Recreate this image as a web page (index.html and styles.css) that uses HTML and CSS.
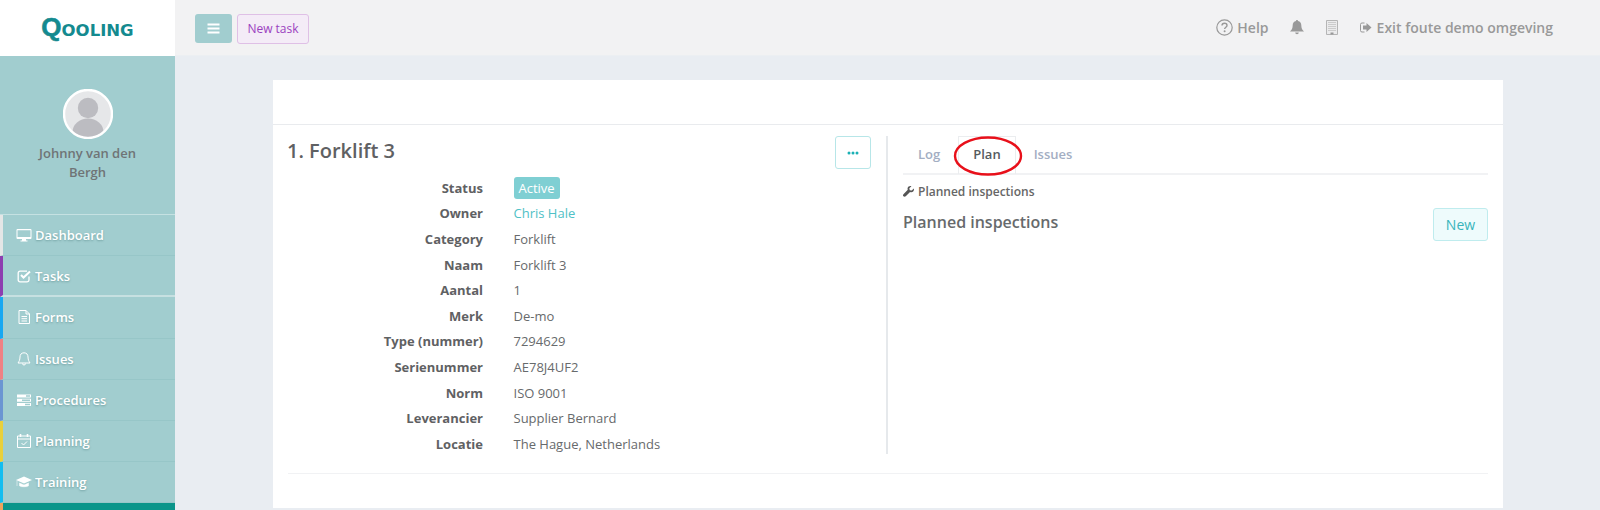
FILE: index.html
```html
<!DOCTYPE html>
<html lang="nl">
<head>
<meta charset="utf-8">
<title>Qooling</title>
<link rel="stylesheet" href="styles.css">
</head>
<body>
<div class="app">
  <aside class="sidebar">
    <div class="brand"><span class="logo"><span class="logo-q">Q</span>OOLING</span></div>
    <div class="profile">
      <svg class="avatar" viewBox="0 0 50 50"><circle cx="25" cy="25" r="24" fill="#e6e7e9" stroke="#fff" stroke-width="2.4"/><clipPath id="av"><circle cx="25" cy="25" r="22.8"/></clipPath><g clip-path="url(#av)" fill="#bcbcc1"><circle cx="25" cy="19" r="10.2"/><ellipse cx="25" cy="43" rx="15.5" ry="13.5"/></g></svg>
      <div class="profile-name">Johnny van den<br>Bergh</div>
    </div>
    <nav class="nav">
      <a class="nav-item strip-white"><svg class="ico" viewBox="0 0 16 16"><path d="M1.5 2h13a1 1 0 0 1 1 1v8a1 1 0 0 1-1 1h-4.500v1.500h1.500v1h-7v-1h1.500V12H1.500a1 1 0 0 1-1-1V3a1 1 0 0 1 1-1zm0 1.200v6.800h13V3.200z" fill="#fff"/></svg>Dashboard</a>
      <a class="nav-item strip-purple sep"><svg class="ico" viewBox="0 0 16 16"><path d="M13 8.500V12a1.800 1.800 0 0 1-1.800 1.800H4A1.800 1.800 0 0 1 2.200 12V5A1.800 1.800 0 0 1 4 3.200h7" fill="none" stroke="#fff" stroke-width="1.300"/><path d="M5 7l2.500 2.500L14 3.500" fill="none" stroke="#fff" stroke-width="2"/></svg>Tasks</a>
      <a class="nav-item strip-blue"><svg class="ico" viewBox="0 0 16 16"><path d="M3 1.500h7L13.500 5v9.500H3zM10 1.500V5h3.500M5.500 7.500h5.500M5.500 9.700h5.500M5.500 12h5.500" fill="none" stroke="#fff" stroke-width="1"/></svg>Forms</a>
      <a class="nav-item strip-salmon"><svg class="ico" viewBox="0 0 16 16"><path d="M8 1.800c-2.800 0-4 2-4 4.200 0 3-1 4.500-2 6h12c-1-1.500-2-3-2-6 0-2.200-1.200-4.200-4-4.200zM6.500 12.500a1.500 1.500 0 0 0 3 0" fill="none" stroke="#fff" stroke-width="1"/></svg>Issues</a>
      <a class="nav-item strip-steel"><svg class="ico" viewBox="0 0 16 16"><path d="M1 2.500h14v3H1zM1 6.800h14v3H1zM1 11h14v3H1z" fill="#fff"/><path d="M10 3.300h4v1.400h-4zM6 7.600h8V9H6zM9 11.800h5v1.400H9z" fill="#a1cdcf"/></svg>Procedures</a>
      <a class="nav-item strip-yellow"><svg class="ico" viewBox="0 0 16 16"><path d="M1.500 3h13v11.500h-13zM1.500 6h13" fill="none" stroke="#fff" stroke-width="1"/><path d="M4.500 1v3M11.500 1v3" stroke="#fff" stroke-width="1.600"/><path d="M5.500 10l2 2 3.500-3.500" fill="none" stroke="#fff" stroke-width="1"/></svg>Planning</a>
      <a class="nav-item strip-cyan"><svg class="ico" viewBox="0 0 16 16"><path d="M8 2.500L16 6l-8 3.500L0 6z" fill="#fff"/><path d="M3.500 9v2.800c1.500 1.300 7.500 1.300 9 0V9L8 11zM1 6.500V12" fill="#fff" stroke="#fff" stroke-width=".5"/></svg>Training</a>
      <div class="nav-active"></div>
    </nav>
  </aside>
  <div class="main">
    <header class="topbar">
      <button class="menu-btn"><svg viewBox="0 0 12 11" width="13" height="11"><path d="M0 .5h12v2H0zM0 4.500h12v2H0zM0 8.500h12v2H0z" fill="#fff"/></svg></button>
      <button class="task-btn">New task</button>
      <div class="top-right">
        <span class="top-link help"><svg width="17" height="17" viewBox="0 0 17 17"><circle cx="8.500" cy="8.500" r="7.700" fill="none" stroke="#999" stroke-width="1.200"/><path d="M6 6.600C6 5 7.200 4.300 8.500 4.300c1.500 0 2.500.9 2.500 2.100 0 1.800-2.400 1.800-2.400 3.700" fill="none" stroke="#999" stroke-width="1.400"/><circle cx="8.600" cy="12.300" r="1" fill="#999"/></svg>Help</span>
        <svg class="top-bell" width="14" height="15" viewBox="0 0 14 15"><path d="M7 0c.6 0 1 .4 1 1 2.200.4 3.300 2 3.300 4.300 0 3 1 4.700 2.700 6.200H0c1.700-1.500 2.700-3.200 2.700-6.200C2.700 3 3.800 1.400 6 1c0-.6.400-1 1-1zM5.200 12.500h3.600a1.800 1.800 0 0 1-3.600 0z" fill="#999"/></svg>
        <svg class="top-building" width="12" height="15" viewBox="0 0 12 15"><path d="M.5.500h11v14H.5z" fill="#ebebec" stroke="#b5b5b5"/><path d="M2.500 2.500h7M2.500 4.500h7M2.500 6.500h7M2.500 8.500h7M2.500 10.500h7" stroke="#aaa" stroke-dasharray="1 1"/><path d="M4.500 12.500h3v2h-3z" fill="#999"/></svg>
        <span class="top-link exit"><svg width="12" height="11" viewBox="0 0 12 11"><path d="M4.500 1H2a1.500 1.500 0 0 0-1.500 1.500v6A1.500 1.500 0 0 0 2 10h2.500" fill="none" stroke="#999"/><path d="M6.500 1l5 4.500-5 4.500V7.500H3v-4h3.500z" fill="#999"/></svg>Exit foute demo omgeving</span>
      </div>
    </header>
    <main class="content">
      <section class="card">
        <div class="card-head"></div>
        <div class="card-body">
          <div class="col-left">
            <div class="title-row">
              <h1 class="title">1. Forklift 3</h1>
              <button class="more-btn"><svg width="12" height="4" viewBox="0 0 12 4"><circle cx="2" cy="2" r="1.500"/><circle cx="6" cy="2" r="1.500"/><circle cx="10" cy="2" r="1.500"/></svg></button>
            </div>
            <dl class="props">
              <dt>Status</dt><dd><span class="badge">Active</span></dd>
              <dt>Owner</dt><dd><a class="link">Chris Hale</a></dd>
              <dt>Category</dt><dd>Forklift</dd>
              <dt>Naam</dt><dd>Forklift 3</dd>
              <dt>Aantal</dt><dd>1</dd>
              <dt>Merk</dt><dd>De-mo</dd>
              <dt>Type (nummer)</dt><dd>7294629</dd>
              <dt>Serienummer</dt><dd>AE78J4UF2</dd>
              <dt>Norm</dt><dd>ISO 9001</dd>
              <dt>Leverancier</dt><dd>Supplier Bernard</dd>
              <dt>Locatie</dt><dd>The Hague, Netherlands</dd>
            </dl>
          </div>
          <div class="col-right">
            <div class="tabs">
              <span class="tab">Log</span>
              <span class="tab tab-active">Plan<svg class="circle" width="72" height="44" viewBox="0 0 72 44"><ellipse cx="36" cy="22" rx="33" ry="18.500" fill="none" stroke="#e8101a" stroke-width="2.400"/></svg></span>
              <span class="tab">Issues</span>
            </div>
            <div class="crumb"><svg width="11" height="11" viewBox="0 0 12 12"><path d="M11.800 2.800L9.500 5 7.400 4.500 6.900 2.500 9.200.2C7.500-.4 5.300.5 5 2.500c-.1.700 0 1.200.2 1.700L.5 8.900c-.7.700-.7 1.700 0 2.400s1.800.7 2.500 0l4.700-4.700c2.500 1 5-1 4.100-3.800z" fill="#555"/></svg>Planned inspections</div>
            <div class="plan-row">
              <h2 class="plan-title">Planned inspections</h2>
              <button class="new-btn">New</button>
            </div>
          </div>
        </div>
        <hr class="card-rule">
      </section>
    </main>
  </div>
</div>
</body>
</html>
```

FILE: styles.css
```css
* { box-sizing: border-box; }
html, body { margin: 0; height: 100%; overflow: hidden; }
body { font-family: "Open Sans", "Liberation Sans", sans-serif; font-size: 13px; color: #676a6c; background: #e9edf2; }
.app { display: flex; height: 510px; }

.sidebar { width: 175px; flex: none; display: flex; flex-direction: column; background: #a1cdcf; }
.brand { height: 56px; background: #fff; display: flex; align-items: center; justify-content: center; flex: none; }
.logo { font-family: "DejaVu Sans", sans-serif; font-weight: 700; font-size: 16.500px; color: #148a8f; line-height: 1; display: flex; align-items: baseline; padding-top: 1px; }
.logo-q { font-family: "Liberation Sans", sans-serif; font-size: 26px; line-height: 20px; -webkit-text-stroke: .6px #148a8f; }
.profile { height: 159px; flex: none; display: flex; flex-direction: column; align-items: center; padding-top: 33px; border-bottom: 1px solid #c5e1e2; }
.avatar { width: 50px; height: 50px; display: block; }
.profile-name { margin-top: 5px; text-align: center; font-weight: 600; font-size: 13px; line-height: 19px; color: #6f7476; }
.nav { flex: 1; display: flex; flex-direction: column; }
.nav-item { height: 41.200px; flex: none; display: flex; align-items: center; padding-left: 13px; border-left: 3px solid #ccc; border-bottom: 1px solid #97c6c8; color: #fff; font-weight: 600; font-size: 13px; text-shadow: 0 1px 2px rgba(60,110,110,.45); }
.nav-item.sep { border-bottom: 2px solid #c6e0e1; }
.ico { width: 16px; height: 16px; margin-right: 3px; flex: none; }
.strip-white { border-left-color: #e4e6e6; }
.strip-purple { border-left-color: #8d3db0; }
.strip-blue { border-left-color: #18a8f2; }
.strip-salmon { border-left-color: #ef8184; }
.strip-steel { border-left-color: #6b95d2; }
.strip-yellow { border-left-color: #e9d03c; }
.strip-cyan { border-left-color: #12bdf0; }
.nav-active { flex: 1; background: #0a958a; border-left: 3px solid #eda45e; }

.main { flex: 1; min-width: 0; display: flex; flex-direction: column; }
.topbar { height: 56px; flex: none; background: #f2f2f3; display: flex; align-items: center; padding: 0 47px 0 20px; border-bottom: 1px solid #eceff2; }
.menu-btn { width: 37px; height: 29px; margin-top: 2px; border: 0; border-radius: 3px; background: #a1cdcf; display: flex; align-items: center; justify-content: center; padding: 0; }
.task-btn { width: 72px; height: 30px; margin-top: 2px; margin-left: 5px; border: 1px solid #dfc0e6; border-radius: 3px; background: #f4ecf7; color: #9b3fc0; font: 400 12px "Open Sans", sans-serif; padding: 0; }
.top-right { margin-left: auto; display: flex; align-items: center; color: #999; font-weight: 600; font-size: 14px; }
.top-link { display: flex; align-items: center; }
.help svg { margin-right: 4px; }
.top-bell { margin-left: 21px; }
.top-building { margin-left: 22px; }
.exit { margin-left: 22px; }
.exit svg { margin-right: 5px; }

.content { flex: 1; min-height: 0; padding: 24px 97px 2px 98px; }
.card { height: 428px; background: #fff; display: flex; flex-direction: column; }
.card-head { height: 45px; flex: none; border-bottom: 1px solid #e9ebee; }
.card-body { display: flex; padding: 11px 15px 0 14px; height: 348px; flex: none; }
.col-left { width: 601px; flex: none; padding-right: 15px; border-right: 2px solid #e6e9ec; height: 318px; }
.title-row { display: flex; justify-content: space-between; align-items: flex-start; height: 39px; }
.title { margin: 0; padding-top: 3px; font-size: 20px; line-height: 24px; font-weight: 600; color: #5f6163; }
.more-btn { width: 36px; height: 33px; margin-top: 0; border: 1px solid #b7e6e8; border-radius: 3px; background: #fff; padding: 0; display: flex; align-items: center; justify-content: center; fill: #1bb0b5; }
.props { margin: 0; display: grid; grid-template-columns: 196px 1fr; column-gap: 30.500px; grid-auto-rows: 25.600px; align-items: center; line-height: 18px; }
.props dt { text-align: right; font-weight: 700; color: #5f6163; }
.props dd { margin: 0; color: #676a6c; }
.badge { display: inline-block; height: 22px; line-height: 22px; padding: 0 5px; border-radius: 3px; background: #7fcfd3; color: #fff; font-size: 13px; }
.link { color: #4fc1c6; }

.col-right { flex: 1; min-width: 0; padding-left: 15px; }
.tabs { display: flex; height: 39px; border-bottom: 2px solid #f1f2f4; margin-top: 0; }
.tab { position: relative; padding: 9px 15px 0; color: #a3aec3; font-weight: 600; font-size: 13px; line-height: 18px; }
.tab-active { color: #555a5e; border: 1px solid #ebedef; border-bottom: 0; padding: 8px 14px 0; height: 38px; margin: 0 3px 0 3px; }
.circle { position: absolute; left: -7px; top: -3px; }
.crumb { display: flex; align-items: center; gap: 4px; height: 18px; margin-top: 7px; font-size: 12px; font-weight: 600; color: #666; }
.plan-row { display: flex; justify-content: space-between; align-items: flex-start; }
.plan-title { margin: 11px 0 0; font-size: 16px; line-height: 22px; font-weight: 600; color: #676a6c; }
.new-btn { width: 55px; height: 33px; margin-top: 8px; border: 1px solid #bfecee; border-radius: 3px; background: #eefbfc; color: #38b4bb; font: 400 14px "Open Sans", sans-serif; padding: 0; }
.card-rule { margin: 0 15px; border: 0; border-top: 1px solid #f1f2f4; }
```
